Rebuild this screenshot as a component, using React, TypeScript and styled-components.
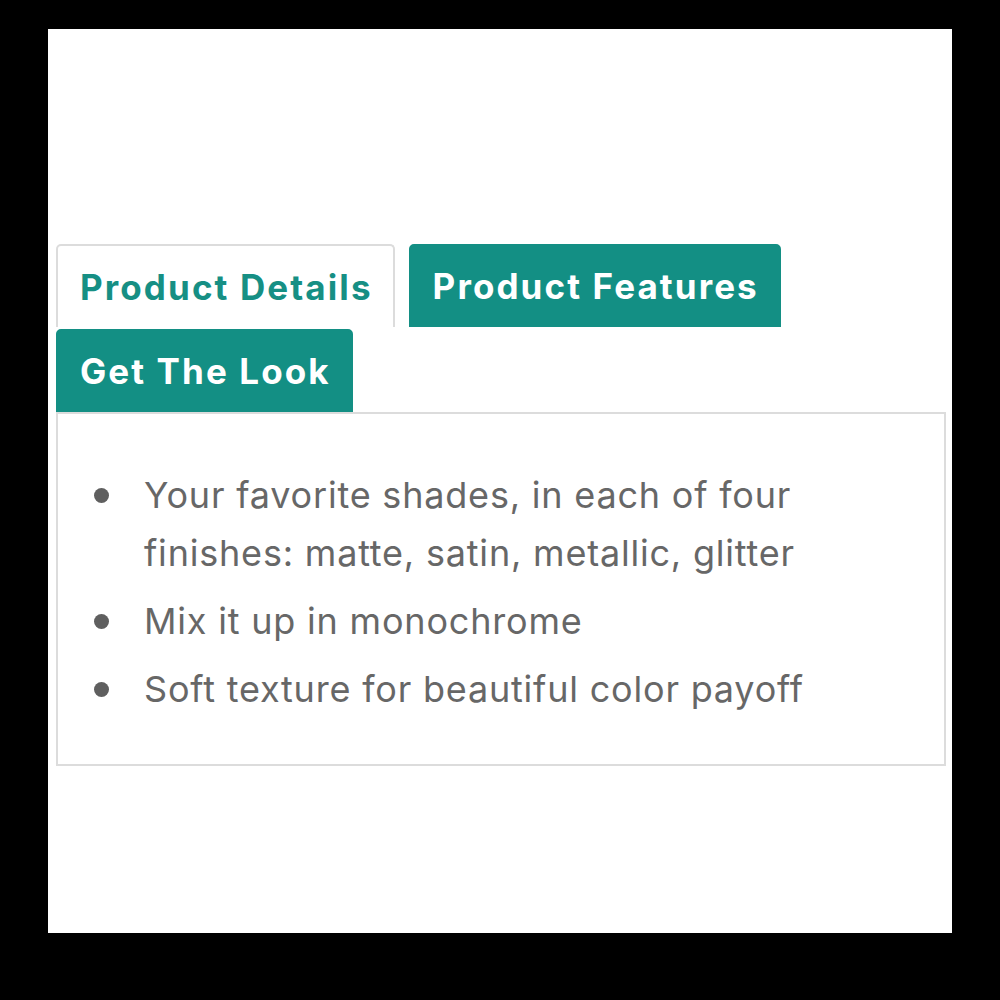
import React from "react";
import styled, { createGlobalStyle } from "styled-components";

const Global = createGlobalStyle`
  html, body {
    margin: 0;
    padding: 0;
    background: #000;
  }
  * { box-sizing: border-box; }
`;

const Frame = styled.div`
  margin: 29px 0 0 48px;
  width: 904px;
  height: 904px;
  background: #fff;
  padding: 215px 0 0 8px;
  font-family: Inter, Roboto, "Liberation Sans", Arial, sans-serif;
`;

const Tabs = styled.div`
  width: 890px;
`;

const TabRow = styled.div`
  display: flex;
  flex-wrap: wrap;
  column-gap: 14px;
  row-gap: 2px;
`;

const Tab = styled.button<{ $active?: boolean }>`
  height: 83px;
  padding: 0 20px 0 22px;
  border: 2px solid ${(p) => (p.$active ? "#dcdcdc" : "#138f84")};
  border-bottom: ${(p) => (p.$active ? "none" : "2px solid #138f84")};
  border-radius: 5px 5px 0 0;
  background: ${(p) => (p.$active ? "#fff" : "#138f84")};
  color: ${(p) => (p.$active ? "#168f84" : "#fff")};
  font-family: inherit;
  font-size: 35px;
  font-weight: 700;
  letter-spacing: 2.1px;
  display: flex;
  align-items: center;
  cursor: pointer;
`;

const Panel = styled.div`
  border: 2px solid #dcdcdc;
  height: 354px;
  padding: 52px 40px 40px 36px;
`;

const List = styled.ul`
  list-style: none;
  margin: 0;
  padding: 0;
  display: flex;
  flex-direction: column;
  gap: 10px;
`;

const Item = styled.li`
  display: flex;
  align-items: flex-start;
  gap: 35px;
  font-size: 36px;
  line-height: 58px;
  letter-spacing: 0.8px;
  color: #676767;
`;

const Dot = styled.span`
  flex-shrink: 0;
  width: 15px;
  height: 15px;
  border-radius: 50%;
  background: #5f5f5f;
  margin-top: 22px;
`;

const Text = styled.span`
  max-width: 720px;
`;

const items = [
  "Your favorite shades, in each of four finishes: matte, satin, metallic, glitter",
  "Mix it up in monochrome",
  "Soft texture for beautiful color payoff",
];

export default function App() {
  return (
    <>
      <Global />
      <Frame>
        <Tabs>
          <TabRow>
            <Tab $active>Product Details</Tab>
            <Tab>Product Features</Tab>
            <Tab>Get The Look</Tab>
          </TabRow>
          <Panel>
            <List>
              {items.map((t) => (
                <Item key={t}>
                  <Dot />
                  <Text>{t}</Text>
                </Item>
              ))}
            </List>
          </Panel>
        </Tabs>
      </Frame>
    </>
  );
}
